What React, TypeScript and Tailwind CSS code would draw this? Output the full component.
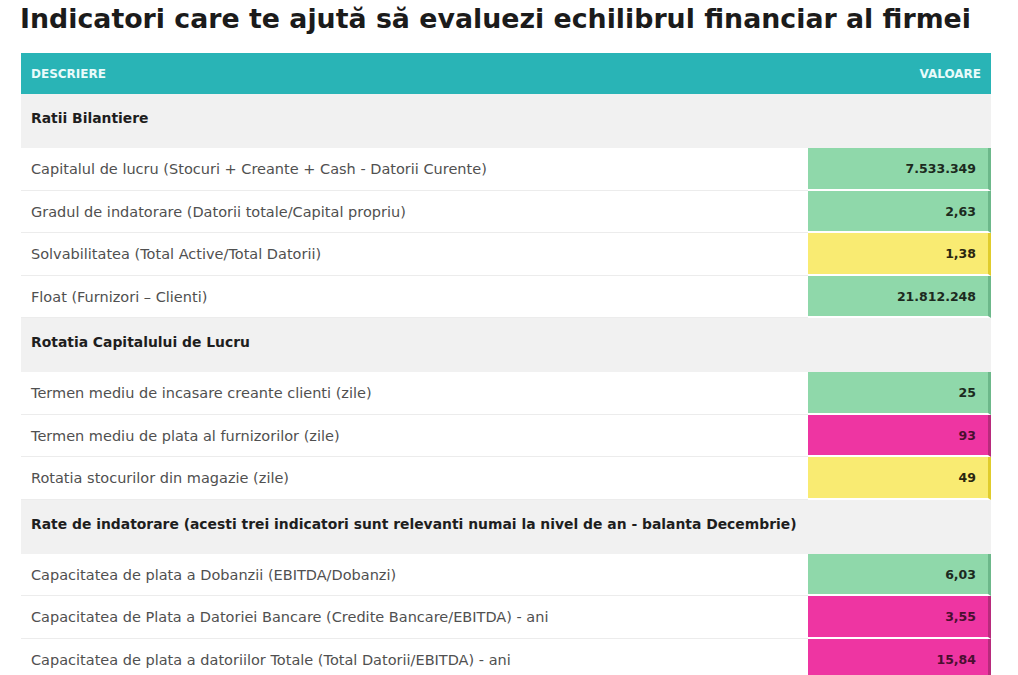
import React from "react";

type Row = { label: string; value: string; tone: "green" | "yellow" | "pink" };
type Section = { title: string; rows: Row[] };

const sections: Section[] = [
  {
    title: "Ratii Bilantiere",
    rows: [
      { label: "Capitalul de lucru (Stocuri + Creante + Cash - Datorii Curente)", value: "7.533.349", tone: "green" },
      { label: "Gradul de indatorare (Datorii totale/Capital propriu)", value: "2,63", tone: "green" },
      { label: "Solvabilitatea (Total Active/Total Datorii)", value: "1,38", tone: "yellow" },
      { label: "Float (Furnizori – Clienti)", value: "21.812.248", tone: "green" },
    ],
  },
  {
    title: "Rotatia Capitalului de Lucru",
    rows: [
      { label: "Termen mediu de incasare creante clienti (zile)", value: "25", tone: "green" },
      { label: "Termen mediu de plata al furnizorilor (zile)", value: "93", tone: "pink" },
      { label: "Rotatia stocurilor din magazie (zile)", value: "49", tone: "yellow" },
    ],
  },
  {
    title: "Rate de indatorare (acesti trei indicatori sunt relevanti numai la nivel de an - balanta Decembrie)",
    rows: [
      { label: "Capacitatea de plata a Dobanzii (EBITDA/Dobanzi)", value: "6,03", tone: "green" },
      { label: "Capacitatea de Plata a Datoriei Bancare (Credite Bancare/EBITDA) - ani", value: "3,55", tone: "pink" },
      { label: "Capacitatea de plata a datoriilor Totale (Total Datorii/EBITDA) - ani", value: "15,84", tone: "pink" },
    ],
  },
];

const toneClass = {
  green: "bg-[#8fd8aa] border-r-[#6cb88a] text-[#1c2a20]",
  yellow: "bg-[#f9eb72] border-r-[#e0cc2c] text-[#2a2610]",
  pink: "bg-[#ee35a2] border-r-[#b82a7c] text-[#4a0f30]",
};

const App = () => {
  return (
    <div className="w-[1018px] h-[675px] overflow-hidden bg-white font-['DejaVu_Sans',sans-serif]">
      <h1 className="pl-[20px] pt-[1px] h-[53px] text-[26.8px] leading-[36px] font-bold text-[#1b1b1b] whitespace-nowrap">
        Indicatori care te ajută să evaluezi echilibrul financiar al firmei
      </h1>

      <div className="ml-[21px] w-[970px] flex flex-col">
        <div className="h-[41px] bg-[#29b4b6] flex items-center justify-between px-[10px] text-[12px] font-bold text-[#e9fbfb]">
          <span>DESCRIERE</span>
          <span>VALOARE</span>
        </div>

        {sections.map((s) => (
          <div key={s.title} className="flex flex-col">
            <div className="h-[54px] bg-[#f1f1f1] pl-[10px] pt-[14px] text-[13.9px] font-bold text-[#1e1e1e]">
              {s.title}
            </div>
            {s.rows.map((r) => (
              <div key={r.label} className="h-[42.5px] flex">
                <div className="flex-1 flex items-center pl-[10px] pt-[3px] text-[14.5px] text-[#505050] border-b border-[#ececec]">
                  {r.label}
                </div>
                <div
                  className={`w-[183px] flex items-center justify-end pr-[12px] pt-[3px] text-[12.5px] font-bold border-r-[3px] border-b-2 border-b-white ${toneClass[r.tone]}`}
                >
                  {r.value}
                </div>
              </div>
            ))}
          </div>
        ))}
      </div>
    </div>
  );
};

export default App;
